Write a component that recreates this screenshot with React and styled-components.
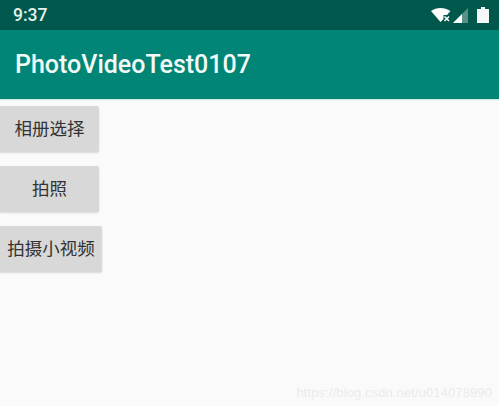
import React from 'react'
import styled, { createGlobalStyle } from 'styled-components';

const Global = createGlobalStyle`
html, body {
    margin: 0;
    padding: 0;
    background: #fafafa;
}
`

function App() {
    return (
        <Screen>
            <Global />
            <StatusBar>
                <Clock>9:37</Clock>
                <StatusIcons>
                    <svg width="20" height="14" viewBox="0 0 20 14">
                        <path d="M0 3C2.800 1 6 0 9.500 0S16.400 1 19.500 3L16 7H12.500V11L9.500 14Z" fill="#fff" />
                        <path d="M13.500 8.500l4.500 4.500M18 8.500l-4.500 4.500" stroke="#fff" strokeWidth="1.500" />
                    </svg>
                    <SignalIcon width="15" height="15" viewBox="0 0 15 15">
                        <path d="M0 15L15 0V15Z" fill="#fff" fillOpacity=".35" />
                        <path d="M0 15L9 6V15Z" fill="#fff" />
                    </SignalIcon>
                    <svg width="12" height="16" viewBox="0 0 12 16">
                        <path d="M4 0h4v2H12V16H0V2h4Z" fill="#f4f8f7" />
                    </svg>
                </StatusIcons>
            </StatusBar>
            <Toolbar>PhotoVideoTest0107</Toolbar>
            <Buttons>
                <Button width={99}>相册选择</Button>
                <Button width={99}>拍照</Button>
                <Button width={102}>拍摄小视频</Button>
            </Buttons>
            <Watermark>https://blog.csdn.net/u014078990</Watermark>
        </Screen>
    )
}

export default App

const Screen = styled.div`
    position: relative;
    width: 499px;
    height: 406px;
    overflow: hidden;
    background: #fafafa;
    font-family: Roboto, "Noto Sans CJK SC", sans-serif;
`

const StatusBar = styled.div`
    height: 30px;
    background: #00574b;
    display: flex;
    align-items: center;
    justify-content: space-between;
    padding: 0 10px 0 13px;
    box-sizing: border-box;
`

const Clock = styled.span`
    color: #e6f0ee;
    font-size: 17.500px;
    font-weight: 500;
`

const StatusIcons = styled.div`
    display: flex;
    align-items: center;
    gap: 2px;
`

const SignalIcon = styled.svg`
    margin-right: 7px;
`

const Toolbar = styled.div`
    height: 69px;
    background: #008577;
    color: #f2faf8;
    font-size: 25px;
    font-weight: 500;
    display: flex;
    align-items: center;
    padding-left: 15px;
    box-shadow: 0 1px 1px rgba(120, 200, 190, .35);
`

const Buttons = styled.div`
    display: flex;
    flex-direction: column;
    align-items: flex-start;
    gap: 14px;
    padding-top: 7px;
`

const Button = styled.div`
    width: ${props => props.width}px;
    height: 46px;
    box-sizing: border-box;
    padding-bottom: 3px;
    background: #d7d8d7;
    border-radius: 0 2px 2px 0;
    box-shadow: 0 1px 2px rgba(0, 0, 0, .14);
    color: #333;
    font-size: 17.500px;
    display: flex;
    align-items: center;
    justify-content: center;
    white-space: nowrap;
`

const Watermark = styled.div`
    position: absolute;
    right: 7px;
    bottom: 6px;
    color: #ebebeb;
    font-family: "Liberation Sans", sans-serif;
    font-size: 13px;
    letter-spacing: .1px;
`
